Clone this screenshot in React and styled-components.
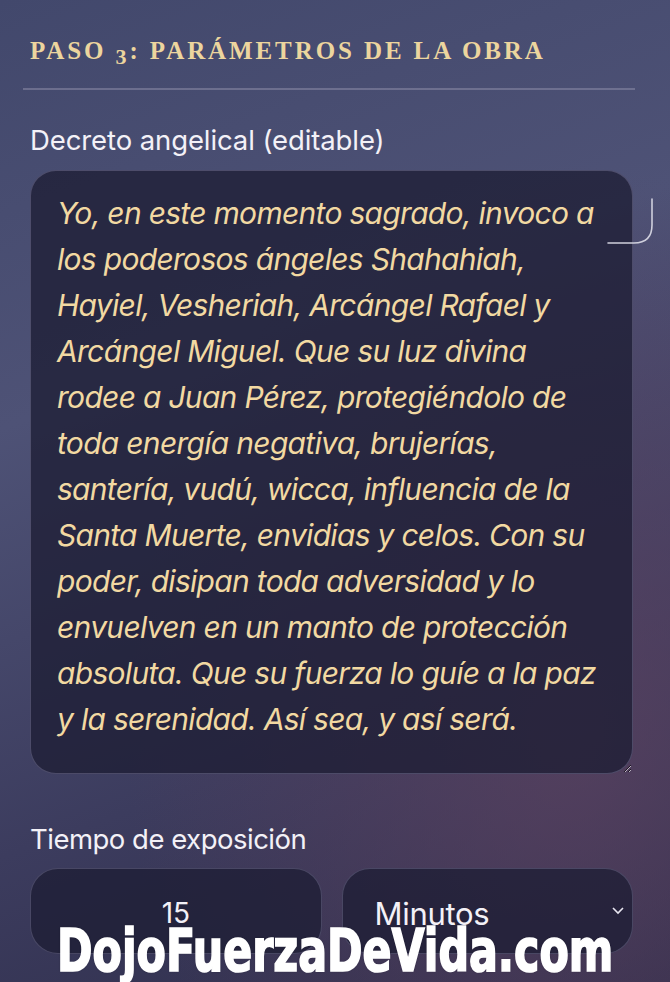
import React from 'react';
import styled, { createGlobalStyle } from 'styled-components';

const decree = [
  'Yo, en este momento sagrado, invoco a',
  'los poderosos ángeles Shahahiah,',
  'Hayiel, Vesheriah, Arcángel Rafael y',
  'Arcángel Miguel. Que su luz divina',
  'rodee a Juan Pérez, protegiéndolo de',
  'toda energía negativa, brujerías,',
  'santería, vudú, wicca, influencia de la',
  'Santa Muerte, envidias y celos. Con su',
  'poder, disipan toda adversidad y lo',
  'envuelven en un manto de protección',
  'absoluta. Que su fuerza lo guíe a la paz',
  'y la serenidad. Así sea, y así será.',
].join('\n');

const GlobalStyle = createGlobalStyle`
  html, body {
    margin: 0;
    height: 982px;
    overflow: hidden;
  }
  body {
    background:
      radial-gradient(ellipse at 85% 75%, rgba(92, 66, 96, 0.75) 0%, rgba(92, 66, 96, 0) 55%),
      linear-gradient(160deg, #42486c 0%, #4e5276 35%, #3c3c5e 70%, #2e2d4a 100%);
    font-family: 'Inter', 'Noto Sans', sans-serif;
  }
`;

const Page = styled.div`
  position: relative;
  height: 982px;
  padding: 36px 37px 0 30px;
  box-sizing: border-box;
`;

const Heading = styled.h2`
  margin: 0;
  font-family: 'Liberation Serif', 'DejaVu Serif', serif;
  font-weight: 700;
  font-size: 25px;
  line-height: 30px;
  letter-spacing: 2.9px;
  text-transform: uppercase;
  color: #ecd59e;
  .num {
    display: inline-block;
    font-size: 22px;
    transform: translateY(5px);
  }
`;

const Divider = styled.div`
  height: 2px;
  margin: 21px -2px 0 -7px;
  background: rgba(140, 140, 168, 0.55);
`;

const Label = styled.div`
  margin-top: ${({ top }) => top}px;
  font-size: 27.5px;
  line-height: 34px;
  letter-spacing: ${({ tight }) => (tight ? -0.5 : -0.1)}px;
  color: #f3f1f7;
`;

const AreaWrap = styled.div`
  position: relative;
  margin-top: 13px;
`;

const Area = styled.textarea`
  display: block;
  width: 100%;
  height: 604px;
  box-sizing: border-box;
  padding: 19px 10px 20px 26px;
  border: 1.5px solid rgba(110, 108, 140, 0.55);
  border-radius: 26px;
  background: rgba(30, 29, 52, 0.78);
  color: #f2d9a2;
  font-family: 'Inter', 'Noto Sans', sans-serif;
  font-style: italic;
  font-size: 30px;
  line-height: 46px;
  letter-spacing: -0.7px;
  white-space: pre;
  overflow: hidden;
  outline: none;
`;

const Corner = styled.svg`
  position: absolute;
  left: 572px;
  top: 25px;
  width: 60px;
  height: 55px;
  pointer-events: none;
`;

const Row = styled.div`
  display: grid;
  grid-template-columns: 1fr 1fr;
  gap: 20px;
  margin-top: 12px;
`;

const Field = styled.div`
  position: relative;
  display: flex;
  align-items: center;
  justify-content: ${({ center }) => (center ? 'center' : 'flex-start')};
  height: 86px;
  padding: 4px 32px 0;
  box-sizing: border-box;
  border: 1.5px solid rgba(110, 108, 140, 0.5);
  border-radius: 28px;
  background: rgba(30, 29, 52, 0.78);
  color: #f3f1f7;
  font-size: ${({ center }) => (center ? 28 : 31)}px;
  letter-spacing: -0.3px;
`;

const Chevron = styled.svg`
  position: absolute;
  right: 6px;
  top: 35px;
  width: 16px;
  height: 12px;
`;

const Watermark = styled.div`
  position: absolute;
  left: 57px;
  top: 921px;
  font-family: 'Liberation Sans Narrow', 'DejaVu Sans Condensed', 'Liberation Sans', sans-serif;
  font-weight: 700;
  font-size: 48px;
  line-height: 48px;
  color: #ffffff;
  white-space: nowrap;
  transform-origin: left top;
  transform: scale(0.99, 1.22);
  -webkit-text-stroke: 1.4px #ffffff;
  text-shadow: 0 0 2px rgba(0, 0, 0, 0.4);
`;

const App = () => (
  <>
    <GlobalStyle />
    <Page>
      <Heading>
        Paso <span className="num">3</span>: Parámetros de la obra
      </Heading>
      <Divider />
      <Label top={33}>Decreto angelical (editable)</Label>
      <AreaWrap>
        <Area defaultValue={decree} spellCheck={false} />
        <Corner viewBox="0 0 60 55">
          <path d="M50 4 V30 Q50 48 32 48 H6" fill="none" stroke="#cfcfdc" strokeWidth="1.6" strokeLinecap="round" />
        </Corner>
      </AreaWrap>
      <Label top={48} tight>Tiempo de exposición</Label>
      <Row>
        <Field center>15</Field>
        <Field>
          Minutos
          <Chevron viewBox="0 0 16 12">
            <path d="M3 4 L8 9 L13 4" fill="none" stroke="#e8e6f0" strokeWidth="1.6" />
          </Chevron>
        </Field>
      </Row>
      <Watermark>DojoFuerzaDeVida.com</Watermark>
    </Page>
  </>
);

export default App;
